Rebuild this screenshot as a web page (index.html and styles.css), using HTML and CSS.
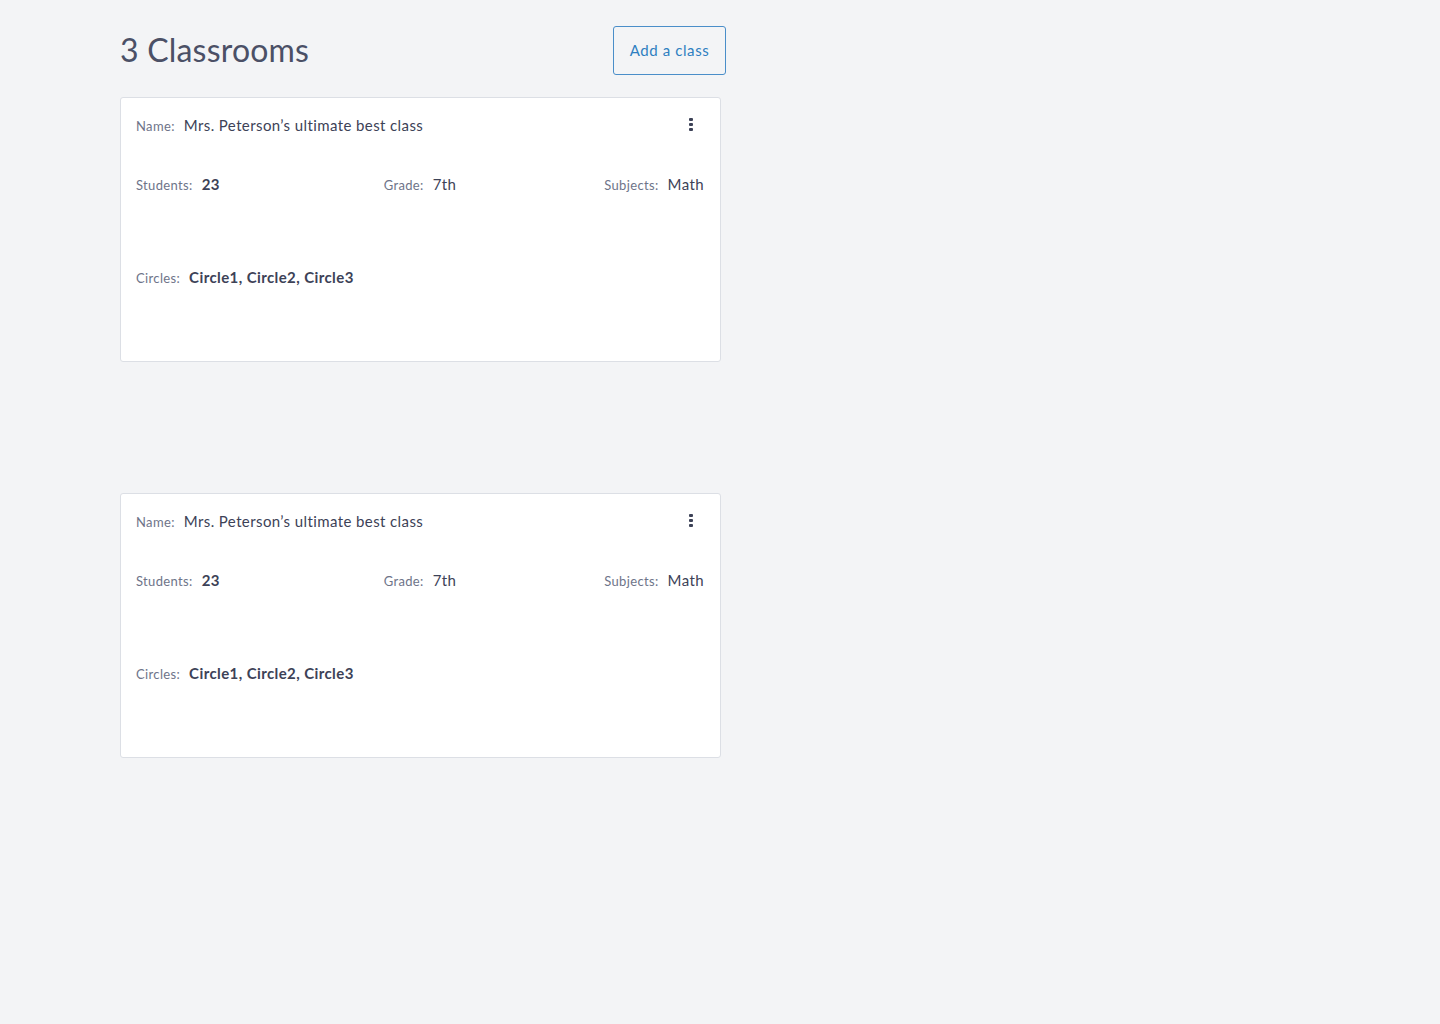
FILE: index.html
```
<!DOCTYPE html>
<html>
<head>
<meta charset="utf-8">
<link rel="stylesheet" href="styles.css">
</head>
<body>
<main class="page">
  <header class="page-head">
    <h1 class="title">3 Classrooms</h1>
    <button class="add-btn">Add a class</button>
  </header>
  <section class="list">
    <article class="card">
      <div class="row name-row">
        <div class="field"><span class="label">Name:</span><span class="value">Mrs. Peterson’s ultimate best class</span></div>
        <span class="kebab"><i></i><i></i><i></i></span>
      </div>
      <div class="row stats">
        <div class="field left"><span class="label">Students:</span><span class="value strong">23</span></div>
        <div class="field mid"><span class="label">Grade:</span><span class="value">7th</span></div>
        <div class="field right"><span class="label">Subjects:</span><span class="value">Math</span></div>
      </div>
      <div class="row circles">
        <div class="field"><span class="label">Circles:</span><span class="value strong">Circle1, Circle2, Circle3</span></div>
      </div>
    </article>
    <article class="card">
      <div class="row name-row">
        <div class="field"><span class="label">Name:</span><span class="value">Mrs. Peterson’s ultimate best class</span></div>
        <span class="kebab"><i></i><i></i><i></i></span>
      </div>
      <div class="row stats">
        <div class="field left"><span class="label">Students:</span><span class="value strong">23</span></div>
        <div class="field mid"><span class="label">Grade:</span><span class="value">7th</span></div>
        <div class="field right"><span class="label">Subjects:</span><span class="value">Math</span></div>
      </div>
      <div class="row circles">
        <div class="field"><span class="label">Circles:</span><span class="value strong">Circle1, Circle2, Circle3</span></div>
      </div>
    </article>
  </section>
</main>
</body>
</html>
```
FILE: styles.css
```
* { box-sizing: border-box; }
html, body { margin: 0; padding: 0; }
body {
  background: #f3f4f6;
  font-family: Lato, "Open Sans", "Liberation Sans", sans-serif;
  color: #3d4257;
  min-height: 1024px;
}
.page {
  padding: 26px 0 0 120px;
  width: 726px;
}
.page-head {
  display: flex;
  justify-content: space-between;
  align-items: center;
  height: 48px;
}
.title {
  margin: 0;
  font-size: 32px;
  font-weight: 400;
  color: #4b5066;
  letter-spacing: 0.2px;
  margin-top: -2px;
}
.add-btn {
  width: 113px;
  height: 49px;
  border: 1px solid #4a8ec9;
  border-radius: 3px;
  background: transparent;
  color: #2f7fc1;
  font-family: inherit;
  font-size: 15px;
  letter-spacing: 0.6px;
  padding: 0;
}
.list {
  display: flex;
  flex-direction: column;
  gap: 131px;
  margin-top: 23px;
}
.card {
  width: 601px;
  height: 265px;
  background: #fff;
  border: 1px solid #dcdfe5;
  border-radius: 3px;
  padding: 15px 16px 0 15px;
}
.row { display: flex; align-items: center; height: 24px; }
.name-row { justify-content: space-between; }
.stats {
  margin-top: 35px;
  display: grid;
  grid-template-columns: 1fr auto 1fr;
}
.stats .right { justify-self: end; }
.circles { margin-top: 69px; }
.field { display: flex; align-items: baseline; white-space: nowrap; }
.label {
  font-size: 13px;
  color: #6e7489;
  letter-spacing: 0.35px;
  margin-right: 9px;
}
.value {
  font-size: 15px;
  color: #3d4257;
  letter-spacing: 0.4px;
}
.value.strong { font-weight: 700; }
.kebab {
  display: flex;
  flex-direction: column;
  gap: 2px;
  margin-right: 11px;
  margin-top: -1px;
}
.kebab i {
  display: block;
  width: 4px;
  height: 3px;
  background: #3d4257;
  border-radius: 1px;
}
```
